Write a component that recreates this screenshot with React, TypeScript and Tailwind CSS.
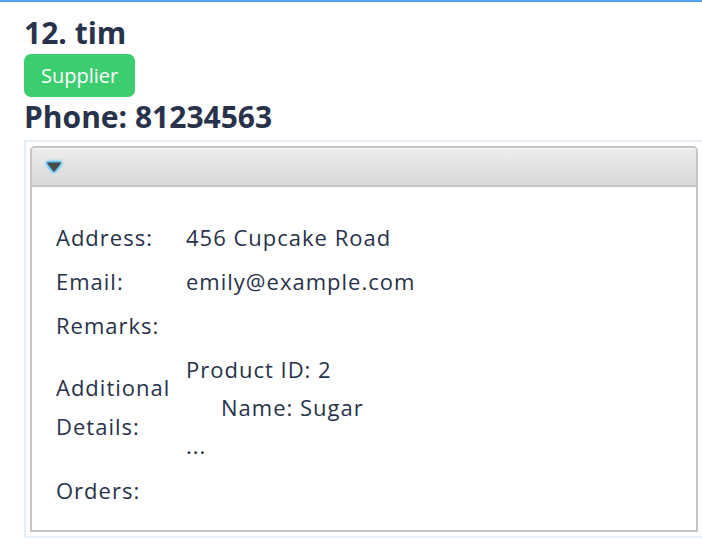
import React from "react";

const font = { fontFamily: "'Open Sans', sans-serif" };

function Row({ label, children, className = "" }: { label: React.ReactNode; children?: React.ReactNode; className?: string }) {
  return (
    <div className={"flex items-center min-h-[38px] " + className}>
      <div className="w-[130px] shrink-0 leading-[38px]">{label}</div>
      <div className="leading-[38px]">{children}</div>
    </div>
  );
}

export default function App() {
  return (
    <div className="w-[702px] h-[544px] overflow-hidden bg-white text-[#28324a]" style={font}>
      <div className="h-[2px] bg-[#5ca1f0]" />
      <div className="pl-[24px]">
        <div className="text-[30px] font-bold leading-[34px] mt-[14px]">12. tim</div>
        <div className="mt-[4px] inline-flex items-center h-[43px] px-[17px] rounded-[7px] bg-[#3ccd6f] text-white text-[20px]">
          Supplier
        </div>
        <div className="text-[30px] font-bold leading-[34px] mt-[3px]">Phone: 81234563</div>
        <div className="mt-[6px] w-[700px] border-2 border-[#e6edf5] pl-[4px] pt-[4px] pb-[4px] bg-white">
          <div className="w-[668px] border-2 border-[#c4c4c4] rounded-t-[5px] bg-white">
            <div className="h-[39px] border-b-2 border-[#c4c4c4] rounded-t-[3px] bg-gradient-to-b from-[#eeeeee] to-[#d8d8d8] shadow-[inset_0_1px_0_#f8f8f8] flex items-center pl-[12px]">
              <svg width="20" height="16" viewBox="0 0 20 16" style={{ filter: "drop-shadow(0 0 1.5px #0fb4ff) drop-shadow(0 0 1.5px #0fb4ff)" }}>
                <polygon points="2.5,3.5 17.5,3.5 10,13" fill="#4a4a4a" />
              </svg>
            </div>
            <div className="pl-[24px] pt-[31px] pb-[21px] text-[22px] tracking-[1px] flex flex-col gap-[6px]">
              <Row label="Address:">456 Cupcake Road</Row>
              <Row label="Email:">emily@example.com</Row>
              <Row label="Remarks:" />
              <div className="flex items-center">
                <div className="w-[130px] shrink-0 leading-[39px]">
                  Additional
                  <br />
                  Details:
                </div>
                <div className="leading-[38px]">
                  <div>Product ID: 2</div>
                  <div className="pl-[35px]">Name: Sugar</div>
                  <div>...</div>
                </div>
              </div>
              <Row label="Orders:" className="mt-[1px]" />
            </div>
          </div>
        </div>
      </div>
    </div>
  );
}
